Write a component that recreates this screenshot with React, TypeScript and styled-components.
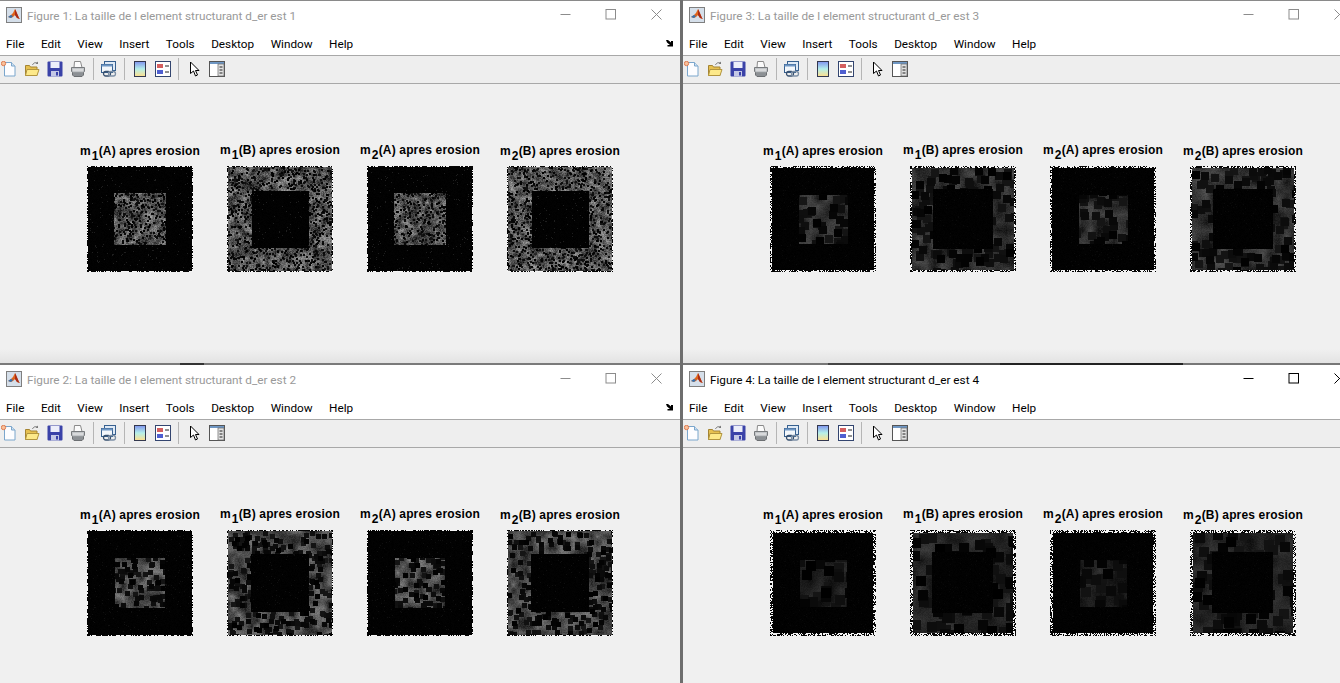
import React, { useEffect, useRef } from "react";
import styled, { createGlobalStyle } from "styled-components";

const GlobalStyle = createGlobalStyle`
  html, body {
    margin: 0;
    padding: 0;
    height: 100%;
    overflow: hidden;
    background: #f0f0f0;
  }
`;

const UI_FONT = `Roboto, "Noto Sans", "Liberation Sans", sans-serif`;
const MENU = ["File", "Edit", "View", "Insert", "Tools", "Desktop", "Window", "Help"];

// gain for m1(A), m1(B), m2(A), m2(B) in each figure
const FIGURES = [
  { n: 1, area: "1 / 1", active: false, gains: [1, 1, 1, 1], edge: "#8a8a8a" },
  { n: 3, area: "1 / 2", active: false, gains: [0.9, 1, 0.95, 1], edge: "#8a8a8a" },
  { n: 2, area: "2 / 1", active: false, gains: [1, 1, 1.05, 1], edge: "linear-gradient(90deg, #7a7a7a 180px, #333 180px, #333 204px, #7a7a7a 204px)" },
  { n: 4, area: "2 / 2", active: true, gains: [0.85, 1, 0.9, 0.9], edge: "linear-gradient(90deg, #777 145px, #444 145px, #444 317px, #222 317px, #222 500px, #777 500px)" },
];

const erosion = [
  { block: 2, seeds: 0.075, level: 88, ring: 1 },
  { block: 5, seeds: 0.024, level: 74, ring: 1 },
  { block: 8, seeds: 0.013, level: 50, ring: 2 },
  { block: 10, seeds: 0.01, level: 36, ring: 3 },
];

const makeRandom = (seed: number) => () => {
  seed = (seed + 0x6d2b79f5) | 0;
  let t = Math.imul(seed ^ (seed >>> 15), 1 | seed);
  t = (t + Math.imul(t ^ (t >>> 7), 61 | t)) ^ t;
  return ((t ^ (t >>> 14)) >>> 0) / 4294967296;
};

const drawErodedImage = (
  canvas: HTMLCanvasElement,
  figure: number,
  plot: number,
  gain: number
) => {
  const size = 106;
  const ctx = canvas.getContext("2d");
  if (!ctx) return;
  const random = makeRandom(figure * 101 + plot * 17);
  const { block, seeds, level, ring } = erosion[figure - 1];
  const isB = plot % 2 === 1;

  // coarse texture, smoothed between grid points
  const cell = 2 + figure * 2;
  const cols = Math.ceil(size / cell) + 2;
  const coarse = Array.from({ length: cols * cols }, () => random());
  const texture = new Float32Array(size * size);
  for (let y = 0; y < size; y++) {
    for (let x = 0; x < size; x++) {
      const gx = Math.floor(x / cell);
      const gy = Math.floor(y / cell);
      const fx = x / cell - gx;
      const fy = y / cell - gy;
      const a = coarse[gy * cols + gx] * (1 - fx) + coarse[gy * cols + gx + 1] * fx;
      const b = coarse[(gy + 1) * cols + gx] * (1 - fx) + coarse[(gy + 1) * cols + gx + 1] * fx;
      const smooth = a * (1 - fy) + b * fy;
      const grain = (random() - 0.5) * (figure === 1 ? 0.6 : 0.3);
      texture[y * size + x] = level * gain * (0.4 + smooth * 1.2 + grain);
    }
  }

  // erosion leaves square black blocks
  for (let y = 0; y < size; y++) {
    for (let x = 0; x < size; x++) {
      if (random() > seeds) continue;
      const shade = random() * 22;
      for (let j = y; j < Math.min(size, y + block); j++) {
        for (let i = x; i < Math.min(size, x + block); i++) {
          texture[j * size + i] = Math.min(texture[j * size + i], shade);
        }
      }
    }
  }

  const low = isB ? 26 - figure : 26 + figure;
  const high = isB ? 81 + figure / 2 : 79 - figure / 2;
  const image = ctx.createImageData(size, size);
  for (let y = 0; y < size; y++) {
    for (let x = 0; x < size; x++) {
      const inner = x >= low && x < high && y >= low && y < high;
      const border = Math.min(x, y, size - 1 - x, size - 1 - y);
      let v = inner !== isB ? texture[y * size + x] : random() < 0.02 ? 30 / figure : random() * 3;
      if (border < ring) v = random() < 0.5 ? 245 : 5;
      const p = (y * size + x) * 4;
      image.data[p] = v;
      image.data[p + 1] = v;
      image.data[p + 2] = v;
      image.data[p + 3] = 255;
    }
  }
  ctx.putImageData(image, 0, 0);
};

const ErodedImage = ({ figure, plot, gain }: { figure: number; plot: number; gain: number }) => {
  const ref = useRef<HTMLCanvasElement>(null);

  useEffect(() => {
    if (ref.current) drawErodedImage(ref.current, figure, plot, gain);
  }, [figure, plot, gain]);

  return <PlotImage ref={ref} width={106} height={106} />;
};

const MatlabLogo = () => (
  <svg width="16" height="16" viewBox="0 0 16 16">
    <rect x="0.5" y="0.5" width="15" height="15" fill="#d5dfea" stroke="#7f7f7f" />
    <path d="M2 10l3-2 2-2 2-4 1 2 3 7 1 1-3-1-2-3-2 2-2 1z" fill="#e0651c" />
    <path d="M9 2l1 2 3 7 1 1-3-1-2-3z" fill="#a92c18" />
    <path d="M2 10l3-2 2 1-2 2z" fill="#2f74b5" />
  </svg>
);

const NewFileIcon = () => (
  <svg width="16" height="16" viewBox="0 0 16 16">
    <path d="M3.500 1.500h7l3.500 3.500v10h-10.500z" fill="#fdfdff" stroke="#7ba6cc" />
    <path d="M10.500 1.500v3.500h3.500" fill="#cfe0f0" stroke="#7ba6cc" />
    <circle cx="2.500" cy="2.500" r="2.200" fill="#f8c09a" stroke="#d9683a" strokeWidth="0.800" />
  </svg>
);

const FolderIcon = () => (
  <svg width="16" height="16" viewBox="0 0 16 16">
    <path d="M1.500 4.500h4l1 1.500h6.500v8.500h-11.500z" fill="#e6c050" stroke="#a48433" />
    <path d="M1.500 14.500l1.500-6h12l-2 6z" fill="#fde98a" stroke="#b2953f" />
    <path d="M8.500 4c1-2.500 3.500-3 5.500-1.500" fill="none" stroke="#777" />
    <path d="M14 0.500v2.500h-2.500z" fill="#777" />
  </svg>
);

const SaveIcon = () => (
  <svg width="16" height="16" viewBox="0 0 16 16">
    <rect x="0.500" y="0.500" width="15" height="15" rx="1" fill="#3a42a8" />
    <rect x="3.500" y="1" width="9" height="6" fill="#eceefa" />
    <rect x="4" y="10" width="8" height="5.500" fill="#c4c8e6" />
    <rect x="9" y="11" width="2" height="3.500" fill="#3a42a8" />
  </svg>
);

const PrintIcon = () => (
  <svg width="16" height="16" viewBox="0 0 16 16">
    <path d="M4.500 0.500h6l1.500 6h-8z" fill="#fbfbfb" stroke="#8a8a8a" />
    <path d="M1.500 6.500h13v4l-2 1.500h-9l-2-1.500z" fill="#c2c5c8" stroke="#777a7d" />
    <path d="M2.500 11.500v2.500l1.500 1.500h8l1.500-1.500v-2.500" fill="#8c9094" stroke="#6c6f72" />
    <path d="M3 9h10" stroke="#eee" />
  </svg>
);

const LinkIcon = () => (
  <svg width="16" height="16" viewBox="0 0 16 16">
    <rect x="3.500" y="0.500" width="11" height="9" fill="#dfeaf6" stroke="#37608f" />
    <rect x="0.500" y="3.500" width="11" height="8" fill="#f3f7fb" stroke="#37608f" />
    <path d="M0.500 3.500h11v2h-11z" fill="#6f97c4" />
    <rect x="2.500" y="10.500" width="7" height="4.500" rx="2.200" fill="none" stroke="#37506f" strokeWidth="1.300" />
    <rect x="7.500" y="10.500" width="7" height="4.500" rx="2.200" fill="none" stroke="#7d90a6" strokeWidth="1.300" />
  </svg>
);

const ColorbarIcon = () => (
  <svg width="16" height="16" viewBox="0 0 16 16">
    <defs>
      <linearGradient id="colorbar-fill" x1="0" y1="0" x2="0" y2="1">
        <stop offset="0" stopColor="#7f93ee" />
        <stop offset="0.5" stopColor="#b5f0ea" />
        <stop offset="1" stopColor="#ffdf8c" />
      </linearGradient>
    </defs>
    <rect x="2.500" y="0.500" width="11" height="15" fill="url(#colorbar-fill)" stroke="#33384f" />
  </svg>
);

const LegendIcon = () => (
  <svg width="16" height="16" viewBox="0 0 16 16">
    <rect x="0.500" y="0.500" width="15" height="15" fill="#fff" stroke="#33456f" />
    <rect x="2" y="3" width="6" height="4" fill="#d45f5f" />
    <rect x="2" y="9" width="6" height="4" fill="#4f5fd0" />
    <path d="M10 5h4M10 11h4" stroke="#222" />
  </svg>
);

const ArrowIcon = () => (
  <svg width="16" height="16" viewBox="0 0 16 16">
    <path d="M4.500 1v11.500l3-2.500 2 5 2-1-2-4.500h3.500z" fill="#fff" stroke="#000" strokeLinejoin="round" />
  </svg>
);

const InspectorIcon = () => (
  <svg width="16" height="16" viewBox="0 0 16 16">
    <rect x="0.500" y="0.500" width="15" height="15" fill="#fff" stroke="#555" />
    <rect x="1" y="1" width="14" height="2" fill="#6f97c4" />
    <rect x="9" y="3" width="6" height="12" fill="#e2e2e2" stroke="#666" strokeWidth="0.700" />
    <path d="M10.500 6h3M10.500 9h3M10.500 12h3" stroke="#222" />
  </svg>
);

const DockArrow = () => (
  <svg width="8" height="7" viewBox="0 0 8 7">
    <path d="M0 0h2l3 2.500V1l2 0v5.500H1.500V5H4L1 2.500z" fill="#000" />
  </svg>
);

const Figure = ({ n, active, gains, edge, area }: (typeof FIGURES)[number]) => {
  const rightColumn = n === 3 || n === 4;
  const lower = n === 2 || n === 4;

  return (
    <Window $area={area} $divider={rightColumn}>
      <TopEdge $background={edge} $thick={lower} />
      <TitleBar>
        <MatlabLogo />
        <TitleText $active={active}>
          Figure {n}: La taille de l element structurant d_er est {n}
        </TitleText>
        <WindowButton $active={active}>
          <svg width="11" height="11" viewBox="0 0 11 11">
            <path d="M0.500 5.500h10" stroke="currentColor" />
          </svg>
        </WindowButton>
        <WindowButton $active={active}>
          <svg width="11" height="11" viewBox="0 0 11 11">
            <rect x="1" y="0.500" width="9.500" height="9.500" fill="none" stroke="currentColor" />
          </svg>
        </WindowButton>
        <WindowButton $active={active}>
          <svg width="11" height="11" viewBox="0 0 11 11">
            <path d="M0.500 0.500l10 10M10.500 0.500l-10 10" stroke="currentColor" />
          </svg>
        </WindowButton>
      </TitleBar>
      <MenuBar>
        {MENU.map((item) => (
          <MenuItem key={item}>{item}</MenuItem>
        ))}
        <DockSlot>
          <DockArrow />
        </DockSlot>
      </MenuBar>
      <Toolbar>
        <NewFileIcon />
        <FolderIcon />
        <SaveIcon />
        <PrintIcon />
        <Separator />
        <LinkIcon />
        <Separator />
        <ColorbarIcon />
        <LegendIcon />
        <Separator />
        <ArrowIcon />
        <InspectorIcon />
      </Toolbar>
      <PlotArea $shaded={!lower}>
        {gains.map((gain, plot) => (
          <Plot key={plot}>
            <PlotTitle $raised={plot === 1 || plot === 2}>
              m<Sub>{plot < 2 ? 1 : 2}</Sub>({plot % 2 ? "B" : "A"}) apres erosion
            </PlotTitle>
            <ErodedImage figure={n} plot={plot} gain={gain} />
          </Plot>
        ))}
      </PlotArea>
    </Window>
  );
};

const App = () => (
  <>
    <GlobalStyle />
    <Desktop>
      {FIGURES.map((figure) => (
        <Figure key={figure.n} {...figure} />
      ))}
    </Desktop>
  </>
);

const Desktop = styled.div`
  display: grid;
  grid-template-columns: 680px 660px;
  grid-template-rows: 363px 320px;
  width: 1340px;
  height: 683px;
  overflow: hidden;
`;

const Window = styled.section<{ $area: string; $divider: boolean }>`
  grid-area: ${(p) => p.$area};
  display: flex;
  flex-direction: column;
  width: ${(p) => (p.$divider ? 683 : 680)}px;
  min-height: 0;
  box-sizing: border-box;
  border-left: ${(p) => (p.$divider ? "3px solid" : "none")};
  border-image: linear-gradient(90deg, #6e6e6e 66%, #dcdcdc 66%) 1;
  background: #f0f0f0;
  font-family: ${UI_FONT};
`;

const TopEdge = styled.div<{ $background: string; $thick: boolean }>`
  flex: none;
  height: ${(p) => (p.$thick ? 2 : 1)}px;
  background: ${(p) => p.$background};
`;

const TitleBar = styled.div`
  flex: none;
  display: flex;
  align-items: center;
  height: 27px;
  padding-left: 6px;
  background: #fff;
`;

const TitleText = styled.span<{ $active: boolean }>`
  flex: 1;
  margin: 2px 0 0 5px;
  font-size: 11.75px;
  white-space: nowrap;
  color: ${(p) => (p.$active ? "#000" : "#999")};
`;

const WindowButton = styled.span<{ $active: boolean }>`
  display: flex;
  justify-content: center;
  align-items: center;
  width: 45px;
  height: 27px;
  color: ${(p) => (p.$active ? "#000" : "#8c8c8c")};
  &:last-child {
    margin: 0 1px;
  }
`;

const MenuBar = styled.nav`
  flex: none;
  position: relative;
  display: flex;
  align-items: center;
  gap: 16.5px;
  height: 28px;
  padding: 4px 0 0 6px;
  box-sizing: border-box;
  background: #fff;
  border-bottom: 1px solid #a8a8a8;
`;

const MenuItem = styled.span`
  font-size: 11.75px;
  color: #000;
`;

const DockSlot = styled.span`
  position: absolute;
  right: 6px;
  top: 12px;
  display: flex;
`;

const Toolbar = styled.div`
  flex: none;
  display: flex;
  align-items: center;
  gap: 7px;
  height: 28px;
  padding: 0 0 2px 1px;
  box-sizing: border-box;
  background: #eee;
  border-bottom: 1px solid #a8a8a8;
`;

const Separator = styled.span`
  width: 1px;
  height: 22px;
  background: #b5b5b5;
`;

const PlotArea = styled.div<{ $shaded: boolean }>`
  flex: 1;
  display: grid;
  grid-template-columns: repeat(4, 140px);
  align-content: start;
  padding: 58px 0 0 70px;
  background: ${(p) =>
    p.$shaded ? "linear-gradient(#f0f0f0 calc(100% - 14px), #e3e3e3)" : "#f0f0f0"};
`;

const Plot = styled.figure`
  display: flex;
  flex-direction: column;
  align-items: center;
  margin: 0;
`;

const PlotTitle = styled.figcaption<{ $raised: boolean }>`
  height: 24px;
  box-sizing: border-box;
  padding-top: ${(p) => (p.$raised ? 0 : 1)}px;
  font-family: "Liberation Sans", Arial, sans-serif;
  font-size: 12px;
  line-height: 17px;
  font-weight: 700;
  letter-spacing: 0.15px;
  white-space: nowrap;
  color: #000;
`;

const Sub = styled.sub`
  margin-left: 1px;
  font-size: 12px;
  line-height: 0;
  vertical-align: -5px;
`;

const PlotImage = styled.canvas`
  display: block;
  width: 106px;
  height: 106px;
  filter: blur(0.35px);
`;

export default App;
